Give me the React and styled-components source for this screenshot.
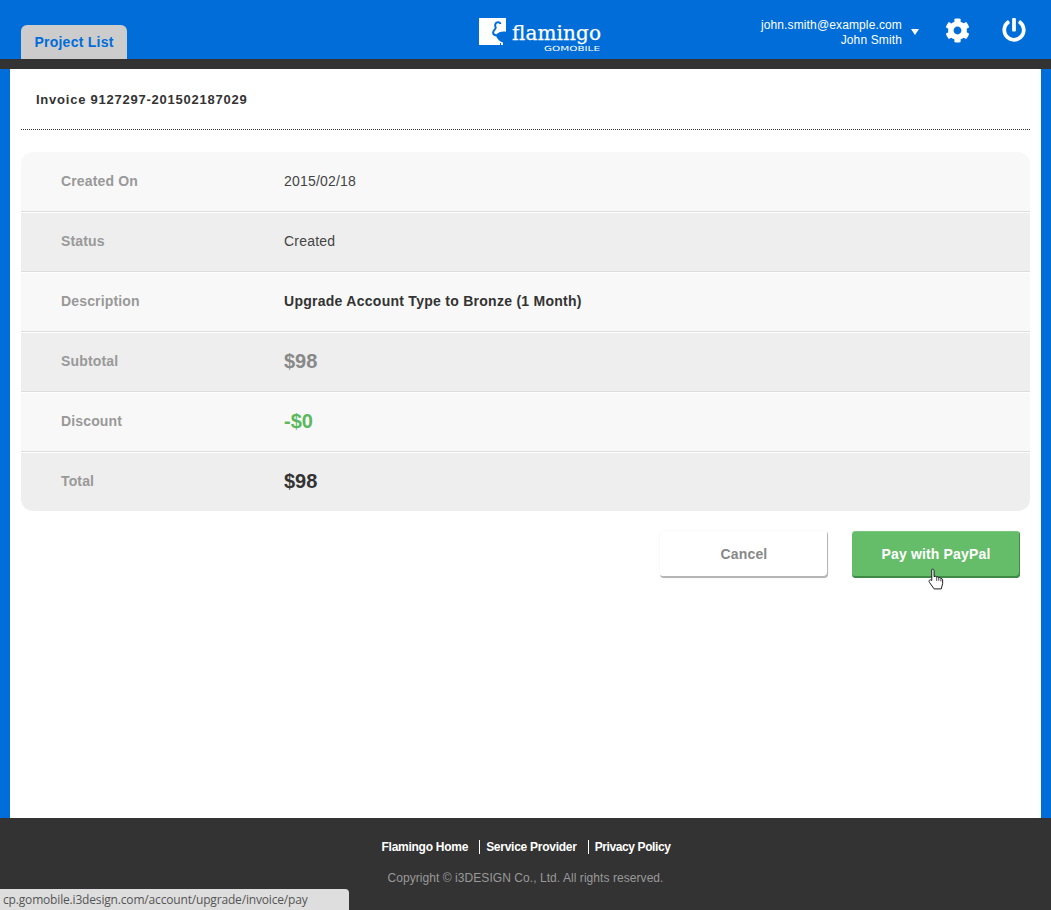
import React from 'react';
import styled, { createGlobalStyle } from 'styled-components';
import { FaCog, FaPowerOff } from 'react-icons/fa';

const Global = createGlobalStyle`
  html, body { margin: 0; padding: 0; height: 100%; }
  body { font-family: "Liberation Sans", Arial, sans-serif; background: #fff; }
  #root { height: 100%; }
`;
const Page = styled.div`
  position: relative; width: 1051px; height: 910px; overflow: hidden;
  display: flex; flex-direction: column; background: #006dd9;
`;
const Header = styled.header`
  height: 59px; flex: none; background: #006dd9; display: grid;
  grid-template-columns: 1fr auto 1fr; align-items: stretch; padding: 0 25px 0 21px;
`;
const TabSlot = styled.div`display: flex; align-items: flex-end;`;
const Tab = styled.a`
  display: block; width: 106px; height: 34px; background: #ccc; border-radius: 6px 6px 0 0;
  color: #006dd9; font-weight: 700; font-size: 14px; line-height: 35px; text-align: center; letter-spacing: .25px;
`;
const Logo = styled.svg`
  display: block; width: 124px; height: 38px; margin: 16px 0 0 35px;
`;
const UserArea = styled.div`
  display: flex; justify-content: flex-end; align-items: flex-start; padding-top: 18px;
`;
const UserText = styled.div`
  color: #fff; font-size: 12px; line-height: 15px; text-align: right; letter-spacing: .13px;
`;
const Caret = styled.span`
  width: 0; height: 0; margin: 11px 0 0 9px; border: 4px solid transparent;
  border-top: 6px solid #fff; border-bottom: 0;
`;
const IconBtn = styled.span`
  color: #fff; display: flex; margin-left: ${p => p.$gap}px; font-size: ${p => p.$size}px;
`;
const DarkBar = styled.div`height: 10px; flex: none; background: #333;`;
const Main = styled.main`
  flex: 1; margin: 0 10px; background: #fff; padding: 0 11px;
`;
const Title = styled.h1`
  margin: 0; height: 60px; padding-left: 15px; border-bottom: 1px dotted #333;
  font-size: 13px; font-weight: 700; line-height: 61px; color: #333; letter-spacing: .76px;
`;
const Table = styled.div`
  margin-top: 22px; border-radius: 12px; overflow: hidden;
`;
const Row = styled.div`
  height: ${p => (p.$last ? 59 : 60)}px; box-sizing: border-box; display: flex; align-items: center;
  padding-bottom: 2px;
  background: ${p => (p.$alt ? '#eee' : '#f8f8f8')};
  border-bottom: ${p => (p.$last ? 0 : '1px solid #ddd')};
  box-shadow: ${p => (p.$first ? 'none' : 'inset 0 1px 0 #fff')};
`;
const Label = styled.div`
  width: 263px; padding-left: 40px; box-sizing: border-box; font-size: 14px; font-weight: 700; color: #999;
  letter-spacing: .15px;
`;
const Value = styled.div`
  font-size: ${p => (p.$big ? '20px' : '14px')};
  font-weight: ${p => (p.$bold ? 700 : 400)};
  color: ${p => p.$color || '#444'};
  margin-top: ${p => (p.$big ? '2px' : '0')};
  letter-spacing: ${p => (p.$big ? '0' : p.$bold ? '.27px' : '.2px')};
`;
const Actions = styled.div`
  display: flex; justify-content: flex-end; gap: 24px; margin-top: 20px; padding-right: 10px;
`;
const Button = styled.button`
  width: 168px; height: 47px; padding: 0 0 2px; border: 0; border-radius: 4px;
  font: 700 14px "Liberation Sans", Arial, sans-serif; letter-spacing: .15px;
  background: ${p => (p.$primary ? '#65bc69' : '#fff')};
  color: ${p => (p.$primary ? '#fff' : '#888')};
  box-shadow: ${p => (p.$primary
    ? 'inset -1px -2px 0 #3f8a47, inset 0 1px 0 #7cc77f'
    : 'inset -1px -2px 0 #b5b5b5, 0 0 2px rgba(0,0,0,.08)')};
`;
const Cursor = styled.svg`
  position: absolute; left: 928px; top: 568px; width: 17px; height: 22px;
`;
const Footer = styled.footer`
  height: 92px; flex: none; background: #333; text-align: center; padding-top: 22px; box-sizing: border-box;
`;
const Links = styled.div`
  display: flex; justify-content: center; font-size: 12px; font-weight: 700; color: #fff; line-height: 14px;
  letter-spacing: -.26px; padding-left: 1px;
`;
const FootLink = styled.a`
  padding: 0 ${p => (p.$last ? 0 : 11)}px 0 ${p => (p.$first ? 0 : 6)}px;
  border-left: ${p => (p.$first ? 0 : '1px solid #fff')};
  letter-spacing: ${p => (p.$last ? '-.4px' : 'inherit')};
`;
const Copy = styled.div`
  margin-top: 17px; font-size: 12px; line-height: 14px; color: #999; letter-spacing: .06px;
`;
const StatusBar = styled.div`
  position: absolute; left: 0; bottom: 0; width: 349px; height: 21px; background: #dedede;
  border-top-right-radius: 4px; color: #555; font: 12px/21px "Open Sans", "Liberation Sans", sans-serif;
  padding-left: 3px; box-sizing: border-box; letter-spacing: -.17px;
`;

const rows = [
  ['Created On', <Value>2015/02/18</Value>],
  ['Status', <Value>Created</Value>],
  ['Description', <Value $bold $color="#333">Upgrade Account Type to Bronze (1 Month)</Value>],
  ['Subtotal', <Value $bold $big $color="#888">$98</Value>],
  ['Discount', <Value $bold $big $color="#5cb85c">-$0</Value>],
  ['Total', <Value $bold $big $color="#333">$98</Value>],
];

export default function App() {
  return (
    <Page>
      <Global />
      <Header>
        <TabSlot><Tab>Project List</Tab></TabSlot>
        <Logo viewBox="0 0 124 38" aria-label="flamingo gomobile">
          <rect x="0" y="2" width="27" height="27" fill="#fff" />
          <path d="M21.500 8c-.5-2-3.500-2.500-4.800-.7-1.300 1.800-.2 3.500 0 4.300.4 1.500-2.600 2.700-2.600 5 0 1.800 1.600 2.800 3.300 3" fill="none" stroke="#006dd9" strokeWidth="2" />
          <path d="M16.500 19c3-3 6.500-4 9.500-3.500l2 .5v13h-4v-2.500c-3-.5-5.500-3-7.500-7.500z" fill="#006dd9" />
          <path d="M21.500 27v2" stroke="#006dd9" strokeWidth="1" />
          <text x="33" y="24" fontFamily="DejaVu Serif" fontSize="20" fill="#fff" stroke="#fff" strokeWidth=".25" textLength="89">flamingo</text>
          <text x="65" y="35" fontFamily="DejaVu Sans" fontSize="7" fill="#fff" textLength="56" lengthAdjust="spacingAndGlyphs">GOMOBILE</text>
        </Logo>
        <UserArea>
          <UserText>john.smith@example.com<br />John Smith</UserText>
          <Caret />
          <IconBtn $gap={26} $size={25}><FaCog /></IconBtn>
          <IconBtn $gap={32} $size={24}><FaPowerOff /></IconBtn>
        </UserArea>
      </Header>
      <DarkBar />
      <Main>
        <Title>Invoice 9127297-201502187029</Title>
        <Table>
          {rows.map(([label, value], i) => (
            <Row key={label} $alt={i % 2 === 1} $first={i === 0} $last={i === rows.length - 1}>
              <Label>{label}</Label>
              {value}
            </Row>
          ))}
        </Table>
        <Actions>
          <Button>Cancel</Button>
          <Button $primary>Pay with PayPal</Button>
        </Actions>
      </Main>
      <Footer>
        <Links>
          <FootLink $first>Flamingo Home</FootLink>
          <FootLink>Service Provider</FootLink>
          <FootLink $last>Privacy Policy</FootLink>
        </Links>
        <Copy>Copyright © i3DESIGN Co., Ltd. All rights reserved.</Copy>
      </Footer>
      <StatusBar>cp.gomobile.i3design.com/account/upgrade/invoice/pay</StatusBar>
      <Cursor viewBox="0 0 18 23">
        <path d="M4 1.500c1-.8 2.200-.3 2.400 1V9l1-.3c1-.3 1.600.3 1.800.8.8-.5 1.800-.2 2.200.6.8-.5 2-.1 2.300.9.8-.2 1.800.3 1.800 1.500v4l-1.500 5.500H6.500L1.500 15c-.8-1-.4-2 .3-2.400.8-.4 1.600 0 2.200.6V1.500z" fill="#fff" stroke="#111" strokeWidth="1" strokeLinejoin="round" />
        <path d="M9.200 9.500v4M11.400 10v3.500M13.700 11v3" stroke="#111" strokeWidth=".8" fill="none" />
      </Cursor>
    </Page>
  );
}
